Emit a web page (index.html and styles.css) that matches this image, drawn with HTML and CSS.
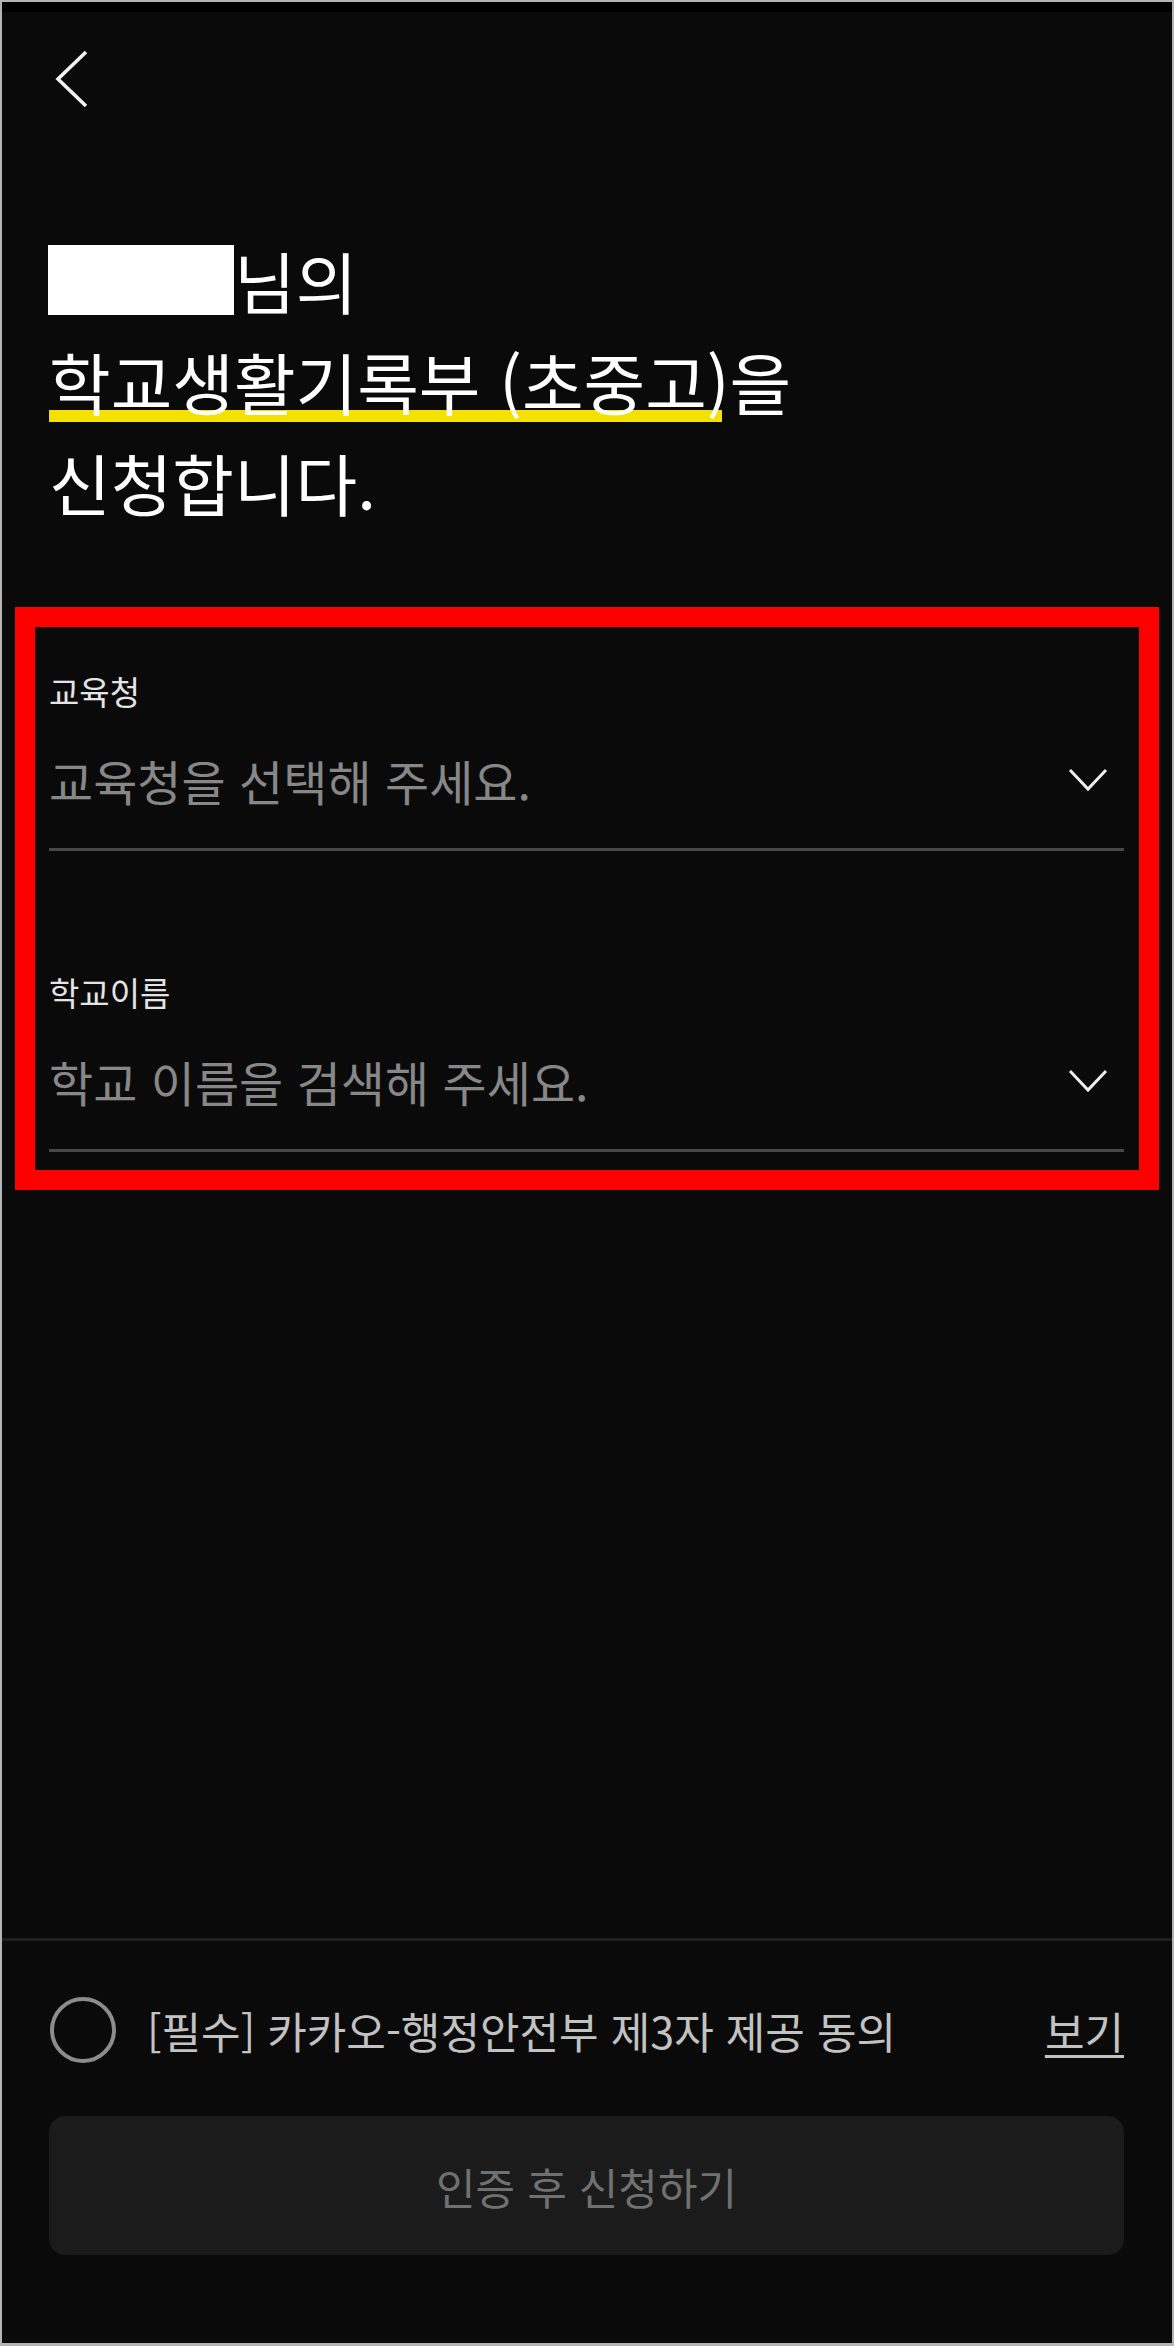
FILE: index.html
```html
<!DOCTYPE html>
<html lang="ko">
<head>
<meta charset="utf-8">
<title>학교생활기록부 신청</title>
<link rel="stylesheet" href="styles.css">
</head>
<body>
<div class="screen">
  <div class="statusbar"></div>
  <nav class="nav">
    <svg class="back" width="34" height="58" viewBox="0 0 34 58" aria-label="뒤로">
      <path d="M31 2 L3 29 L31 56" fill="none" stroke="#f2f2f2" stroke-width="3.6" stroke-linecap="butt" stroke-linejoin="miter"/>
    </svg>
  </nav>
  <main class="main">
    <h1 class="title">
      <span class="line"><span class="redact"></span>님의</span>
      <span class="line"><span class="hl">학교생활기록부 (초중고)</span>을</span>
      <span class="line">신청합니다.</span>
    </h1>

    <section class="form">
      <div class="field">
        <div class="label">교육청</div>
        <div class="select">
          <span class="placeholder">교육청을 선택해 주세요.</span>
          <svg class="chev" width="40" height="24" viewBox="0 0 40 24"><path d="M2 2 L20 21 L38 2" fill="none" stroke="#eeeeee" stroke-width="3"/></svg>
        </div>
      </div>
      <div class="field">
        <div class="label">학교이름</div>
        <div class="select">
          <span class="placeholder">학교 이름을 검색해 주세요.</span>
          <svg class="chev" width="40" height="24" viewBox="0 0 40 24"><path d="M2 2 L20 21 L38 2" fill="none" stroke="#eeeeee" stroke-width="3"/></svg>
        </div>
      </div>
    </section>
  </main>

  <footer class="bottom">
    <div class="agree">
      <span class="radio"></span>
      <span class="agree-text">[필수] 카카오-행정안전부 제3자 제공 동의</span>
      <a class="view">보기</a>
    </div>
    <button class="submit" type="button">인증 후 신청하기</button>
  </footer>
</div>
</body>
</html>
```

FILE: styles.css
```css
html, body {
  margin: 0;
  padding: 0;
  background: #0a0a0a;
}

body {
  font-family: "Noto Sans CJK KR", "Noto Sans", sans-serif;
}

.screen {
  box-sizing: border-box;
  width: 1174px;
  height: 2346px;
  border: 2px solid #b4b4b4;
  border-bottom-width: 3px;
  background: #0a0a0a;
  display: flex;
  flex-direction: column;
}

.statusbar {
  height: 10px;
  background: #000;
  flex: none;
}

.nav {
  padding: 38px 0 0 53px;
  flex: none;
}

.back {
  display: block;
}

.main {
  padding: 0 48px 0 47px;
}

.title {
  margin: 121px 0 0;
  font-size: 67px;
  line-height: 101px;
  font-weight: 400;
  color: #fff;
}

.line {
  display: block;
}

.redact {
  display: inline-block;
  width: 186px;
  height: 70px;
  background: #fff;
  vertical-align: -6px;
  margin-left: -1px;
}

.hl {
  background-image: linear-gradient(#f5e100, #f5e100);
  background-repeat: no-repeat;
  background-size: calc(100% - 7px) 12px;
  background-position: 0 calc(100% - 7px);
}

.form {
  margin: 75px -35px 0 -34px;
  border: 20px solid #ff0000;
  padding: 44px 15px 18px 14px;
  display: flex;
  flex-direction: column;
  gap: 121px;
}

.label {
  font-size: 33px;
  line-height: 40px;
  color: #e4e4e4;
}

.select {
  margin-top: 39px;
  display: flex;
  align-items: center;
  justify-content: space-between;
  padding-bottom: 38px;
  border-bottom: 3px solid #474747;
}

.placeholder {
  font-size: 48px;
  line-height: 60px;
  color: #878787;
}

.chev {
  display: block;
  margin-right: 16px;
}

.bottom {
  margin-top: auto;
  border-top: 3px solid #1f1f1f;
  padding: 56px 48px 88px 47px;
}

.agree {
  display: flex;
  align-items: center;
  height: 66px;
}

.radio {
  box-sizing: border-box;
  width: 66px;
  height: 66px;
  border: 4px solid #8c8c8c;
  border-radius: 50%;
  margin-left: 1px;
  flex: none;
}

.agree-text {
  margin-left: 31px;
  font-size: 43px;
  line-height: 56px;
  color: #c2c2c2;
  flex: 1;
}

.view {
  font-size: 43px;
  line-height: 56px;
  color: #c2c2c2;
  text-decoration: underline;
  text-decoration-thickness: 3px;
  text-underline-offset: 6px;
}

.submit {
  display: block;
  width: 100%;
  height: 139px;
  margin-top: 53px;
  border: none;
  border-radius: 16px;
  background: #1b1b1b;
  color: #707070;
  font-family: "Noto Sans CJK KR", "Noto Sans", sans-serif;
  font-size: 43px;
  padding: 0;
}
```
